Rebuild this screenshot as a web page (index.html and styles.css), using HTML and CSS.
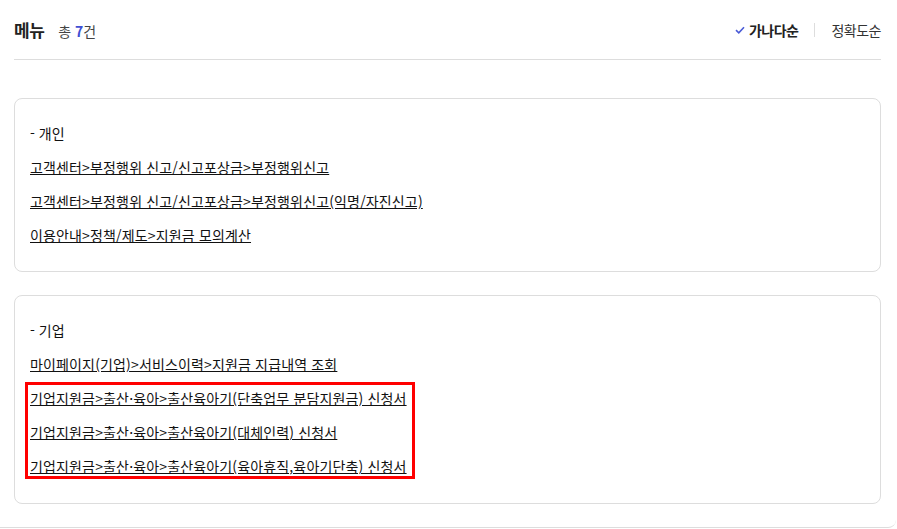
FILE: index.html
```html
<!DOCTYPE html>
<html lang="ko">
<head>
  <meta charset="UTF-8" />
  <title>메뉴 검색결과</title>
  <link rel="stylesheet" href="styles.css">
</head>
<body>
  <div class="wrap">
    <div class="head">
      <h2 class="title">메뉴 <span class="count">총 <b>7</b>건</span></h2>
      <div class="sort">
        <a class="sort-item on" href="#">
          <svg width="10" height="8" viewBox="0 0 10 8"><path d="M1 4.2 L3.8 6.8 L9 1.2" fill="none" stroke="#4a5bd6" stroke-width="1.6"/></svg>
          가나다순
        </a>
        <span class="bar"></span>
        <a class="sort-item" href="#">정확도순</a>
      </div>
    </div>

    <div class="box">
      <p class="group">- 개인</p>
      <a class="link" href="#">고객센터&gt;부정행위 신고/신고포상금&gt;부정행위신고</a>
      <a class="link" href="#">고객센터&gt;부정행위 신고/신고포상금&gt;부정행위신고(익명/자진신고)</a>
      <a class="link" href="#">이용안내&gt;정책/제도&gt;지원금 모의계산</a>
    </div>

    <div class="box">
      <p class="group">- 기업</p>
      <a class="link" href="#">마이페이지(기업)&gt;서비스이력&gt;지원금 지급내역 조회</a>
      <div class="mark">
        <a class="link" href="#">기업지원금&gt;출산·육아&gt;출산육아기(단축업무 분담지원금) 신청서</a>
        <a class="link" href="#">기업지원금&gt;출산·육아&gt;출산육아기(대체인력) 신청서</a>
        <a class="link" href="#">기업지원금&gt;출산·육아&gt;출산육아기(육아휴직,육아기단축) 신청서</a>
      </div>
    </div>
  </div>
</body>
</html>
```

FILE: styles.css
```css
body { margin: 0; background: #fff; font-family: "Noto Sans CJK KR", "Noto Sans", sans-serif; color: #222; }
.wrap { width: 896px; padding: 0 15px 23px 14px; box-sizing: border-box; border-bottom: 1px solid #ddd; border-bottom-right-radius: 8px; }
.head { display: flex; justify-content: space-between; align-items: center; height: 59px; border-bottom: 1px solid #ddd; }
.title { margin: 0; font-size: 17px; font-weight: 700; letter-spacing: -0.3px; }
.count { margin-left: 9px; font-size: 14px; font-weight: 400; color: #444; letter-spacing: 0; }
.count b { color: #3f4fd3; }
.sort { display: flex; align-items: center; font-size: 14px; letter-spacing: -0.5px; }
.sort-item { display: flex; align-items: center; gap: 4px; color: #333; text-decoration: none; }
.sort-item.on { font-weight: 700; color: #222; }
.bar { width: 1px; height: 14px; background: #ddd; margin: 0 16px; }
.box { margin-top: 38px; border: 1px solid #ddd; border-radius: 8px; padding: 24px 15px 26px; display: flex; flex-direction: column; align-items: flex-start; }
.box + .box { margin-top: 23px; }
.group { margin: 0; font-size: 14px; line-height: 20px; color: #111; }
.link { margin-top: 14px; font-size: 14px; line-height: 20px; letter-spacing: 0.15px; color: #111; text-decoration: underline; }
.mark { display: flex; flex-direction: column; align-items: flex-start; border: 3px solid #f00; margin: 8px 0 -2px -5px; padding: 3px 5px 0 2px; }
.mark .link:first-child { margin-top: 0; }
```
